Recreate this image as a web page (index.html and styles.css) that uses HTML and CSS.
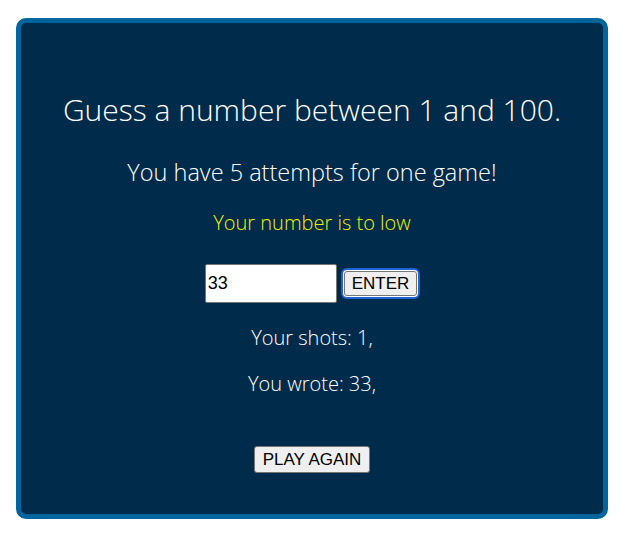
FILE: index.html
```html
<!DOCTYPE html>
<html>
<head>
<meta charset="utf-8">
<link rel="stylesheet" href="styles.css">
</head>
<body>
<div class="game">
  <h1 class="title">Guess a number between 1 and 100.</h1>
  <p class="subtitle">You have 5 attempts for one game!</p>
  <p class="hint">Your number is to low</p>
  <div class="entry">
    <input class="guess" type="text" value="33">
    <button class="btn btn-enter">ENTER</button>
  </div>
  <p class="info info-shots">Your shots: 1,</p>
  <p class="info info-wrote">You wrote: 33,</p>
  <button class="btn btn-again">PLAY AGAIN</button>
</div>
</body>
</html>
```
FILE: styles.css
```css
html, body {
  margin: 0;
  padding: 0;
  background: #ffffff;
}
body {
  padding: 18px 16px 0;
  font-family: "Open Sans", "DejaVu Sans", sans-serif;
}
.game {
  background: #002b4a;
  border: 5px solid #03659d;
  border-radius: 10px;
  padding: 70px 0 41px;
  display: flex;
  flex-direction: column;
  align-items: center;
  color: #ffffff;
  font-weight: 350;
}
.title {
  margin: 0;
  font-size: 30px;
  font-weight: 350;
  line-height: 34px;
}
.subtitle {
  margin: 30px 0 0;
  font-size: 23.5px;
  line-height: 30px;
}
.hint {
  margin: 22px 0 0;
  font-size: 20px;
  line-height: 28px;
  color: #f2f200;
}
.entry {
  margin-top: 27px;
  display: flex;
  align-items: center;
  gap: 7px;
  padding-right: 2px;
}
.guess {
  box-sizing: border-box;
  width: 132px;
  height: 39px;
  margin: 0;
  padding: 0 2px;
  border: 1px solid #767676;
  border-radius: 2px;
  font-family: "Liberation Sans", Arial, sans-serif;
  font-size: 18px;
  color: #000000;
  background: #ffffff;
}
.btn {
  box-sizing: border-box;
  margin: 0;
  font-family: "Liberation Sans", Arial, sans-serif;
  font-size: 17px;
  font-weight: 400;
  color: #000000;
  background: #efefef;
  border: 1px solid #767676;
  border-radius: 3px;
  padding: 0 6px;
  line-height: 20px;
}
.btn-enter {
  height: 25px;
  padding: 0 7px;
  box-shadow: 0 0 0 1px #ffffff, 0 0 0 3px #1f63d6;
}
.info {
  margin: 0;
  font-size: 20px;
  line-height: 28px;
}
.info-shots {
  margin-top: 21px;
}
.info-wrote {
  margin-top: 18px;
}
.btn-again {
  margin-top: 48px;
  height: 27px;
  padding: 0 8px;
}
```
